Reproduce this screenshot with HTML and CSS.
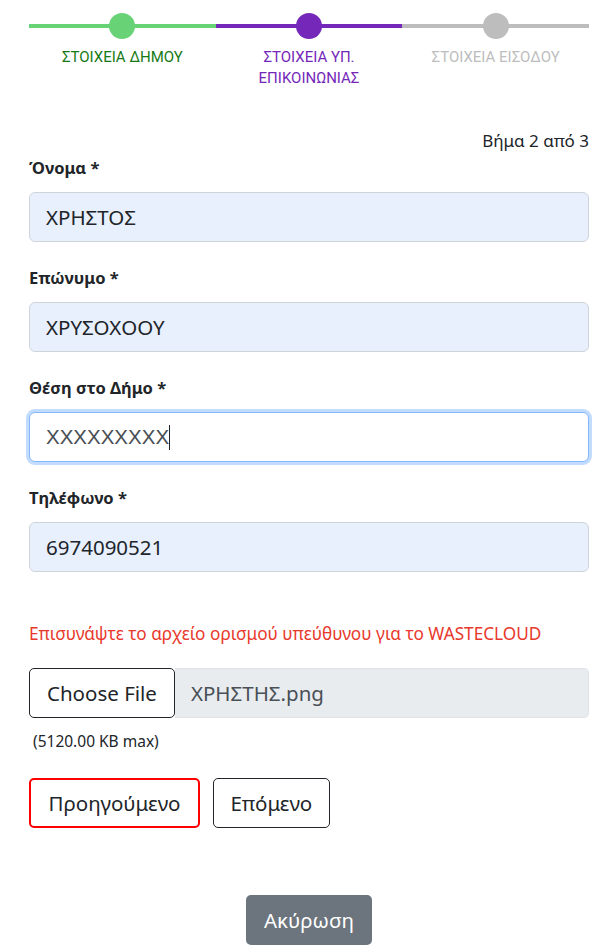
FILE: index.html
```html
<!DOCTYPE html>
<html lang="el">
<head>
    <meta charset="UTF-8">
    <meta name="viewport" content="width=device-width, initial-scale=1.0">
    <title>Εγγραφή - Βήμα 2</title>
    <link rel="stylesheet" href="styles.css">
</head>
<body>
    <div class="wizard">
        <div class="stepper">
            <div class="step done">
                <div class="step-track"><span class="step-dot"></span></div>
                <div class="step-label">ΣΤΟΙΧΕΙΑ ΔΗΜΟΥ</div>
            </div>
            <div class="step active">
                <div class="step-track"><span class="step-dot"></span></div>
                <div class="step-label">ΣΤΟΙΧΕΙΑ ΥΠ.<br>ΕΠΙΚΟΙΝΩΝΙΑΣ</div>
            </div>
            <div class="step">
                <div class="step-track"><span class="step-dot"></span></div>
                <div class="step-label">ΣΤΟΙΧΕΙΑ ΕΙΣΟΔΟΥ</div>
            </div>
        </div>

        <div class="step-count">Βήμα 2 από 3</div>

        <form class="form">
            <div class="field">
                <label for="firstName">Όνομα *</label>
                <input type="text" id="firstName" class="autofill" value="ΧΡΗΣΤΟΣ">
            </div>
            <div class="field">
                <label for="lastName">Επώνυμο *</label>
                <input type="text" id="lastName" class="autofill" value="ΧΡΥΣΟΧΟΟΥ">
            </div>
            <div class="field">
                <label for="position">Θέση στο Δήμο *</label>
                <div class="input focused">XXXXXXXXX<span class="caret"></span></div>
            </div>
            <div class="field">
                <label for="phone">Τηλέφωνο *</label>
                <input type="text" id="phone" class="autofill" value="6974090521">
            </div>

            <p class="attach-note">Επισυνάψτε το αρχείο ορισμού υπεύθυνου για το WASTECLOUD</p>

            <div class="file-input">
                <span class="file-btn">Choose File</span>
                <span class="file-name">ΧΡΗΣΤΗΣ.png</span>
            </div>
            <div class="file-hint">(5120.00 KB max)</div>

            <div class="nav-buttons">
                <button type="button" class="btn btn-prev">Προηγούμενο</button>
                <button type="button" class="btn btn-next">Επόμενο</button>
            </div>

            <div class="cancel-row">
                <button type="button" class="btn btn-cancel">Ακύρωση</button>
            </div>
        </form>
    </div>
</body>
</html>
```

FILE: styles.css
```css
body {
    margin: 0;
    font-family: "Noto Sans", "Open Sans", sans-serif;
    color: #212529;
    background: #fff;
}

.wizard {
    padding: 13px 25px 0 29px;
}

/* stepper */
.stepper {
    display: flex;
}

.step {
    flex: 1;
    display: flex;
    flex-direction: column;
    align-items: center;
}

.step-track {
    position: relative;
    width: 100%;
    height: 26px;
    display: flex;
    justify-content: center;
}

.step-track::before {
    content: "";
    position: absolute;
    left: 0;
    right: 0;
    top: 11px;
    height: 4px;
    background: #bdbdbd;
}

.step-dot {
    position: relative;
    width: 26px;
    height: 26px;
    border-radius: 50%;
    background: #bdbdbd;
}

.step.done .step-track::before,
.step.done .step-dot {
    background: #68d277;
}

.step.active .step-track::before,
.step.active .step-dot {
    background: #7427b9;
}

.step-label {
    margin-top: 8px;
    font-family: Roboto, "Liberation Sans", sans-serif;
    font-size: 15px;
    line-height: 21px;
    text-align: center;
    color: #bdbdbd;
}

.step.done .step-label {
    color: #157a15;
}

.step.active .step-label {
    color: #7427b9;
}

.step-count {
    margin-top: 40px;
    text-align: right;
    font-size: 17px;
    line-height: 24px;
}

/* form */
.form {
    margin-top: 3px;
}

.field {
    margin-bottom: 24px;
}

.field label {
    display: block;
    font-size: 16.5px;
    font-weight: bold;
    line-height: 24px;
    margin-bottom: 12px;
}

.field input,
.input {
    box-sizing: border-box;
    display: block;
    width: 100%;
    height: 50px;
    padding: 0 16px;
    border: 1px solid #ced4da;
    border-radius: 6px;
    font-family: inherit;
    font-size: 20.5px;
    color: #212529;
    background: #fff;
}

.input {
    display: flex;
    align-items: center;
}

.field input.autofill {
    background: #e8f0fe;
}

.input.focused {
    border-color: #86b7fe;
    box-shadow: 0 0 0 3px #c2dcfd;
    color: #4a4f55;
    font-family: "Liberation Sans", sans-serif;
    font-size: 20.5px;
}

.caret {
    display: inline-block;
    width: 1px;
    height: 25px;
    background: #212529;
}

.attach-note {
    margin: 50px 0 22px;
    font-size: 17.2px;
    line-height: 24px;
    color: #e8392c;
}

.file-input {
    display: flex;
    height: 50px;
}

.file-btn {
    display: flex;
    align-items: center;
    box-sizing: border-box;
    padding: 0 17px;
    border: 1px solid #212529;
    border-radius: 5px;
    font-size: 20.5px;
    background: #fff;
}

.file-name {
    flex: 1;
    display: flex;
    align-items: center;
    padding-left: 16px;
    border: 1px solid #dee2e6;
    border-left: none;
    border-radius: 0 5px 5px 0;
    background: #e9ecef;
    color: #495057;
    font-size: 20.5px;
}

.file-hint {
    margin: 11px 0 0 4px;
    font-size: 15.5px;
    line-height: 24px;
}

.nav-buttons {
    display: flex;
    gap: 13px;
    margin-top: 25px;
}

.btn {
    height: 50px;
    padding: 0 16px;
    border-radius: 5px;
    font-family: inherit;
    font-size: 20.5px;
    color: #212529;
    background: #fff;
    cursor: pointer;
}

.btn-prev {
    border: 2px solid #f00;
    padding: 0 17.5px;
}

.btn-next {
    border: 1px solid #212529;
    padding: 0 16.5px;
}

.cancel-row {
    display: flex;
    justify-content: center;
    margin-top: 67px;
}

.btn-cancel {
    border: none;
    background: #6c757d;
    color: #fff;
    padding: 0 18px;
}
```
